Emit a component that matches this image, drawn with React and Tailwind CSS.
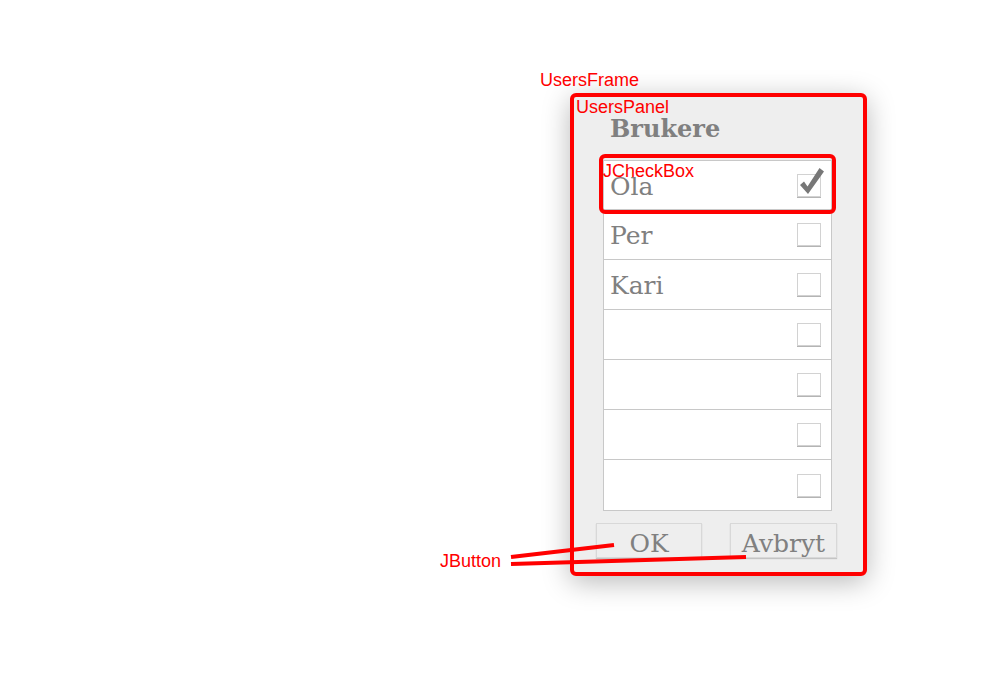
import React from 'react';

const names = ['Ola', 'Per', 'Kari', '', '', '', ''];

function Box({ checked }) {
  return (
    <div className="relative w-[24px] h-[23px] bg-white border border-[#d2d2d2] shadow-[0_1px_0_#b4b4b4]">
      {checked && (
        <svg className="absolute left-0 top-0 overflow-visible" width="24" height="23" viewBox="0 0 24 23">
          <path d="M2 10 L6 6.5 L9.5 11.5 L21.5 -7 L26 -3.5 L10 19 Z" fill="#777777" />
        </svg>
      )}
    </div>
  );
}

function Note({ className, children }) {
  return (
    <div className={'absolute text-[18px] leading-[20px] text-[#ff0000] ' + className} style={{ fontFamily: '"Liberation Sans", Arial, sans-serif' }}>
      {children}
    </div>
  );
}

export default function App() {
  const serif = { fontFamily: '"DejaVu Serif", "Liberation Serif", serif' };
  return (
    <div className="relative w-[1000px] h-[700px] bg-white overflow-hidden">
      <div className="pt-[93px] pl-[570px]">
        <div className="w-[297px] h-[483px] border-4 border-[#ff0000] rounded-[6px] bg-[#eeeeee] shadow-[0_6px_28px_rgba(0,0,0,0.28)] flex flex-col" style={serif}>
          <div className="mt-[18px] pl-[36px] text-[24px] leading-[28px] font-bold text-[#808080]">Brukere</div>
          <div className="mt-[17px] ml-[29px] w-[229px] bg-white border border-[#c8c8c8] divide-y divide-[#c8c8c8]">
            {names.map((n, i) => (
              <div key={i} className={(i === 0 ? 'h-[49px]' : 'h-[50px]') + ' flex items-center justify-between pl-[6px] pr-[10px]'}>
                <span className="text-[25px] leading-[49px] pt-[2px] text-[#808080]">{n}</span>
                <Box checked={i === 0} />
              </div>
            ))}
          </div>
          <div className="mt-[12px] pl-[22px] pr-[26px] flex justify-between">
            <button className="w-[106px] h-[35px] bg-[#eeeeee] border border-[#d8d8d8] shadow-[0_1px_1px_#c4c4c4] text-[25px] leading-[35px] pt-[2px] text-[#808080]" style={serif}>OK</button>
            <button className="w-[107px] h-[35px] bg-[#eeeeee] border border-[#d8d8d8] shadow-[0_1px_1px_#c4c4c4] text-[25px] leading-[35px] pt-[2px] text-[#808080]" style={serif}>Avbryt</button>
          </div>
        </div>
      </div>

      <div className="absolute left-[599px] top-[154px] w-[237px] h-[60px] border-4 border-[#ff0000] rounded-[6px]" />
      <Note className="left-[540px] top-[70px]">UsersFrame</Note>
      <Note className="left-[576px] top-[97px]">UsersPanel</Note>
      <Note className="left-[603px] top-[161px]">JCheckBox</Note>
      <Note className="left-[440px] top-[551px]">JButton</Note>
      <svg className="absolute left-0 top-0" width="1000" height="700">
        <line x1="511" y1="557" x2="614" y2="545" stroke="#ff0000" strokeWidth="4" />
        <line x1="511" y1="564" x2="746" y2="557" stroke="#ff0000" strokeWidth="4" />
      </svg>
    </div>
  );
}
